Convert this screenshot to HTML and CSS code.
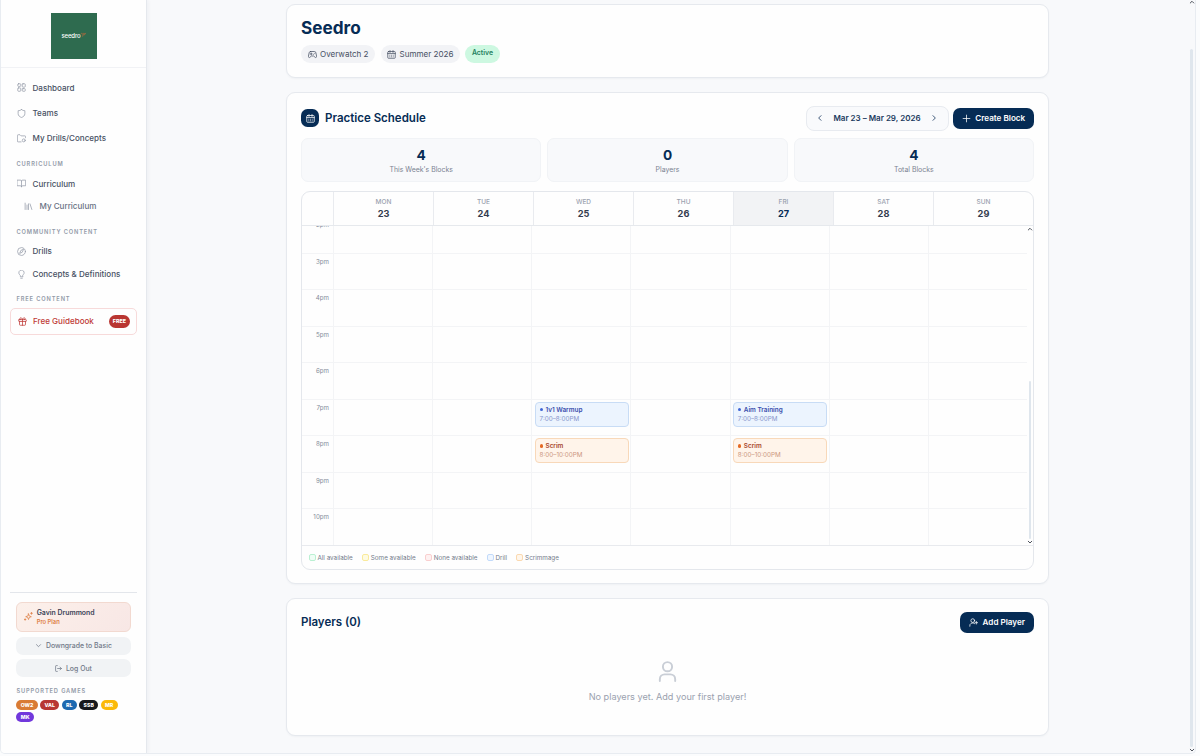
FILE: index.html
```html
<!DOCTYPE html>
<html lang="en">
<head>
    <meta charset="UTF-8">
    <meta name="viewport" content="width=device-width, initial-scale=1.0">
    <title>Seedro - Team</title>
    <link rel="stylesheet" href="styles.css">
</head>
<body>
    <svg class="sprite" xmlns="http://www.w3.org/2000/svg">
        <symbol id="i-dashboard" viewBox="0 0 24 24"><rect x="2" y="2" width="8" height="7" rx="2"/><rect x="14" y="2" width="8" height="9" rx="2"/><rect x="2" y="13" width="8" height="9" rx="2"/><rect x="14" y="15" width="8" height="7" rx="2"/></symbol>
        <symbol id="i-shield" viewBox="0 0 24 24"><path d="M12 1.500c2.500 2 5.500 3 9 3v8c0 5-4 8.500-9 10-5-1.500-9-5-9-10v-8c3.500 0 6.500-1 9-3z"/></symbol>
        <symbol id="i-folder" viewBox="0 0 24 24"><path d="M11 21H3a2 2 0 0 1-2-2V4a2 2 0 0 1 2-2h5l3 3h10a2 2 0 0 1 2 2v3"/><circle cx="18" cy="17" r="4"/></symbol>
        <symbol id="i-book" viewBox="0 0 24 24"><path d="M12 6v15M1 3h8a3 3 0 0 1 3 3 3 3 0 0 1 3-3h8v15h-8a3 3 0 0 0-3 3 3 3 0 0 0-3-3H1z"/></symbol>
        <symbol id="i-library" viewBox="0 0 24 24"><path d="M16 5l5 15M12 5v15M8 8v12M3 3v17"/></symbol>
        <symbol id="i-compass" viewBox="0 0 24 24"><circle cx="12" cy="12" r="10.500"/><path d="M17 7l-3 7-7 3 3-7z"/></symbol>
        <symbol id="i-bulb" viewBox="0 0 24 24"><path d="M15 15c.2-1 .7-1.700 1.500-2.500A7 7 0 1 0 5 8c0 1.300.5 3 2 4.500.8.800 1.500 1.500 2 2.500v3h6zM10 22h4"/></symbol>
        <symbol id="i-gift" viewBox="0 0 24 24"><rect x="2" y="7" width="20" height="5" rx="1"/><path d="M12 7v15M4 12v8a2 2 0 0 0 2 2h12a2 2 0 0 0 2-2v-8M7.500 7a2.500 2.500 0 0 1 0-5C11 2 12 7 12 7s1-5 4.500-5a2.500 2.500 0 0 1 0 5"/></symbol>
        <symbol id="i-spark" viewBox="0 0 24 24"><path d="M12 5l2 5.500 5.500 2-5.500 2-2 5.500-2-5.500-5.500-2 5.500-2zM20 1v5M17.500 3.500h5M3 18v4M1 20h4"/></symbol>
        <symbol id="i-down" viewBox="0 0 24 24"><path d="M5 9l7 7 7-7"/></symbol>
        <symbol id="i-up" viewBox="0 0 24 24"><path d="M5 16l7-7 7 7"/></symbol>
        <symbol id="i-left" viewBox="0 0 24 24"><path d="M15 5l-7 7 7 7"/></symbol>
        <symbol id="i-right" viewBox="0 0 24 24"><path d="M9 5l7 7-7 7"/></symbol>
        <symbol id="i-logout" viewBox="0 0 24 24"><path d="M8 2H4a2 2 0 0 0-2 2v16a2 2 0 0 0 2 2h4M9 12h13M17 7l5 5-5 5"/></symbol>
        <symbol id="i-game" viewBox="0 0 24 24"><path d="M7 4h10a4 4 0 0 1 4 3.500l2 9.500a2.500 2.500 0 0 1-4.500 2L15 16H9l-3.500 3A2.500 2.500 0 0 1 1 17l2-9.500A4 4 0 0 1 7 4zM6 10.500h5M8.500 8v5M15 11.500h.1M18 9h.1"/></symbol>
        <symbol id="i-calendar" viewBox="0 0 24 24"><rect x="2" y="4" width="20" height="18" rx="2"/><path d="M8 1.500v5M16 1.500v5M2 9.500h20M7.500 14h.1M12 14h.1M16.500 14h.1M7.500 18h.1M12 18h.1M16.500 18h.1"/></symbol>
        <symbol id="i-plus" viewBox="0 0 24 24"><path d="M12 3v18M3 12h18"/></symbol>
        <symbol id="i-user" viewBox="0 0 24 24"><circle cx="12" cy="7" r="4.800"/><path d="M4 22v-2a5 5 0 0 1 5-5h6a5 5 0 0 1 5 5v2"/></symbol>
        <symbol id="i-user-plus" viewBox="0 0 24 24"><circle cx="10" cy="7" r="5"/><path d="M2 22a8 8 0 0 1 13-7.200M19.500 9v7M16 12.500h7"/></symbol>
    </svg>

    <div class="app">
        <aside class="sidebar">
            <div class="logo">
                <div class="logo-box">seedro<svg class="logo-mark" viewBox="0 0 12 12"><path d="M1 2l3 2 2-3 2 2 3-1-3 4-3-1-1 4"/></svg></div>
            </div>
            <nav class="nav">
                <a class="nav-item main-item"><svg><use href="#i-dashboard"/></svg>Dashboard</a>
                <a class="nav-item main-item"><svg><use href="#i-shield"/></svg>Teams</a>
                <a class="nav-item main-item"><svg><use href="#i-folder"/></svg>My Drills/Concepts</a>
                <h4 class="nav-title">Curriculum</h4>
                <a class="nav-item"><svg><use href="#i-book"/></svg>Curriculum</a>
                <a class="nav-item sub-item"><svg><use href="#i-library"/></svg>My Curriculum</a>
                <h4 class="nav-title">Community Content</h4>
                <a class="nav-item"><svg><use href="#i-compass"/></svg>Drills</a>
                <a class="nav-item"><svg><use href="#i-bulb"/></svg>Concepts &amp; Definitions</a>
                <h4 class="nav-title">Free Content</h4>
                <a class="guidebook"><svg><use href="#i-gift"/></svg>Free Guidebook<span class="free">FREE</span></a>
            </nav>
            <div class="side-footer">
                <div class="plan">
                    <svg><use href="#i-spark"/></svg>
                    <div>
                        <div class="plan-user">Gavin Drummond</div>
                        <div class="plan-name">Pro Plan</div>
                    </div>
                </div>
                <button class="side-btn"><svg><use href="#i-down"/></svg>Downgrade to Basic</button>
                <button class="side-btn"><svg><use href="#i-logout"/></svg>Log Out</button>
                <h4 class="games-title">Supported Games</h4>
                <div class="games">
                    <span class="game ow">OW2</span>
                    <span class="game val">VAL</span>
                    <span class="game rl">RL</span>
                    <span class="game ssb">SSB</span>
                    <span class="game mr">MR</span>
                    <span class="game mk">MK</span>
                </div>
            </div>
        </aside>

        <main class="main">
            <div class="content">
                <section class="card team">
                    <h1>Seedro</h1>
                    <div class="tags">
                        <span class="tag"><svg><use href="#i-game"/></svg>Overwatch 2</span>
                        <span class="tag"><svg><use href="#i-calendar"/></svg>Summer 2026</span>
                        <span class="tag active">Active</span>
                    </div>
                </section>

                <section class="card schedule">
                    <div class="card-head">
                        <span class="head-icon"><svg><use href="#i-calendar"/></svg></span>
                        <h2>Practice Schedule</h2>
                        <div class="week"><svg><use href="#i-left"/></svg><span>Mar 23 – Mar 29, 2026</span><svg><use href="#i-right"/></svg></div>
                        <button class="btn create"><svg><use href="#i-plus"/></svg>Create Block</button>
                    </div>
                    <div class="stats">
                        <div class="stat"><b>4</b><span>This Week's Blocks</span></div>
                        <div class="stat"><b>0</b><span>Players</span></div>
                        <div class="stat"><b>4</b><span>Total Blocks</span></div>
                    </div>
                    <div class="calendar">
                        <div class="days">
                            <div></div>
                            <div class="day"><span>MON</span><b>23</b></div>
                            <div class="day"><span>TUE</span><b>24</b></div>
                            <div class="day"><span>WED</span><b>25</b></div>
                            <div class="day"><span>THU</span><b>26</b></div>
                            <div class="day today"><span>FRI</span><b>27</b></div>
                            <div class="day"><span>SAT</span><b>28</b></div>
                            <div class="day"><span>SUN</span><b>29</b></div>
                        </div>
                        <div class="hours">
                            <div class="grid">
                                <div class="row"><span>2pm</span><i></i><i></i><i></i><i></i><i></i><i></i><i></i></div>
                                <div class="row"><span>3pm</span><i></i><i></i><i></i><i></i><i></i><i></i><i></i></div>
                                <div class="row"><span>4pm</span><i></i><i></i><i></i><i></i><i></i><i></i><i></i></div>
                                <div class="row"><span>5pm</span><i></i><i></i><i></i><i></i><i></i><i></i><i></i></div>
                                <div class="row"><span>6pm</span><i></i><i></i><i></i><i></i><i></i><i></i><i></i></div>
                                <div class="row">
                                    <span>7pm</span><i></i><i></i>
                                    <div class="cell"><div class="event drill"><b>1v1 Warmup</b><small>7:00–8:00PM</small></div></div>
                                    <i></i>
                                    <div class="cell"><div class="event drill"><b>Aim Training</b><small>7:00–8:00PM</small></div></div>
                                    <i></i><i></i>
                                </div>
                                <div class="row">
                                    <span>8pm</span><i></i><i></i>
                                    <div class="cell"><div class="event scrim"><b>Scrim</b><small>8:00–10:00PM</small></div></div>
                                    <i></i>
                                    <div class="cell"><div class="event scrim"><b>Scrim</b><small>8:00–10:00PM</small></div></div>
                                    <i></i><i></i>
                                </div>
                                <div class="row"><span>9pm</span><i></i><i></i><i></i><i></i><i></i><i></i><i></i></div>
                                <div class="row"><span>10pm</span><i></i><i></i><i></i><i></i><i></i><i></i><i></i></div>
                            </div>
                            <div class="scrollbar"><svg><use href="#i-up"/></svg><div class="thumb"></div><svg><use href="#i-down"/></svg></div>
                        </div>
                        <div class="legend">
                            <span class="all">All available</span>
                            <span class="some">Some available</span>
                            <span class="none">None available</span>
                            <span class="drill-key">Drill</span>
                            <span class="scrim-key">Scrimmage</span>
                        </div>
                    </div>
                </section>

                <section class="card players">
                    <div class="card-head">
                        <h2>Players (0)</h2>
                        <button class="btn add"><svg><use href="#i-user-plus"/></svg>Add Player</button>
                    </div>
                    <div class="empty">
                        <svg><use href="#i-user"/></svg>
                        <p>No players yet. Add your first player!</p>
                    </div>
                </section>
            </div>
            <div class="scrollbar page-scroll"><svg><use href="#i-up"/></svg><div class="thumb"></div><svg><use href="#i-down"/></svg></div>
        </main>
    </div>
</body>
</html>
```
FILE: styles.css
```css
* {
    box-sizing: border-box;
}
body {
    margin: 0;
    height: 756px;
    overflow: hidden;
    background: #fbfcfd;
    font-family: Inter, "Liberation Sans", sans-serif;
    font-size: 8px;
    color: #475063;
}
h1, h2, h4, p {
    margin: 0;
}
svg {
    width: 9px;
    height: 9px;
    flex: none;
    fill: none;
    stroke: currentColor;
    stroke-width: 2;
    stroke-linecap: round;
    stroke-linejoin: round;
}
.sprite {
    display: none;
}
button {
    font-family: inherit;
    border: 0;
    padding: 0;
}
.app {
    display: flex;
    width: 1196px;
    height: 754px;
    border: 1px solid #e8ecf1;
    border-top: 0;
    border-radius: 0 0 5px 5px;
    background: #f8f9fb;
    overflow: hidden;
}

/* sidebar */
.sidebar {
    display: flex;
    flex-direction: column;
    width: 146px;
    flex: none;
    background: #fefefe;
    border-right: 1px solid #e5e8ed;
    box-shadow: 1px 0 4px rgba(20, 40, 80, 0.05);
}
.logo {
    height: 68px;
    padding-top: 12.5px;
    border-bottom: 1px solid #f1f2f5;
}
.logo-box {
    display: flex;
    align-items: center;
    justify-content: center;
    width: 46px;
    height: 46px;
    margin: 0 auto;
    background: #2e6b4f;
    color: #fff;
    font-size: 6px;
    font-weight: 500;
    letter-spacing: -0.1px;
}
.logo-mark {
    width: 5px;
    height: 6px;
    margin-bottom: 2px;
    stroke-width: 1.5;
    color: #c9683c;
}
.nav {
    padding: 7.3px 9px 0 8.5px;
}
.nav-item {
    display: flex;
    align-items: center;
    gap: 7px;
    height: 22.8px;
    padding-left: 7px;
    font-size: 8.05px;
    font-weight: 500;
}
.nav-item svg {
    color: #959ca9;
}
.main-item {
    height: 25.2px;
}
.sub-item {
    padding-left: 14px;
    color: #697183;
}
.nav-title, .games-title {
    font-size: 5.7px;
    font-weight: 600;
    letter-spacing: 0.87px;
    text-transform: uppercase;
    color: #929aa8;
}
.nav-title {
    height: 20.1px;
    margin-top: 1.2px;
    padding: 8px 0 0 7px;
    line-height: 7px;
}
.sub-item + .nav-title, .nav-item:not(.main-item) + .nav-title {
    margin-top: 2px;
}
.guidebook {
    display: flex;
    align-items: center;
    gap: 6.5px;
    height: 27px;
    padding: 0 6.5px 0 7px;
    border: 1px solid #f7dada;
    border-radius: 5px;
    color: #bf3a37;
    font-size: 8.05px;
    font-weight: 500;
}
.free {
    margin-left: auto;
    padding: 0 3.6px;
    height: 13px;
    line-height: 13px;
    border-radius: 7px;
    background: #b93632;
    color: #fff;
    font-size: 5.3px;
    font-weight: 800;
}
.side-footer {
    height: 161px;
    margin: auto 9px 0;
    padding: 8.8px 6.5px 0 6.4px;
    border-top: 1px solid #e3e6eb;
}
.plan {
    display: flex;
    align-items: center;
    gap: 3.8px;
    height: 30.5px;
    padding: 0 0 0.5px 6.5px;
    border: 1px solid #f2d9d0;
    border-radius: 6px;
    background: linear-gradient(135deg, #fcf0ea, #f8e7e5);
    color: #dd7d43;
}
.plan-user {
    font-size: 6.9px;
    line-height: 9px;
    font-weight: 600;
    color: #3a4357;
}
.plan-name {
    font-size: 5.8px;
    line-height: 9px;
    font-weight: 600;
}
.side-btn {
    display: flex;
    align-items: center;
    justify-content: center;
    gap: 4px;
    width: 100%;
    height: 18px;
    margin-top: 4.6px;
    border-radius: 7px;
    background: #f1f3f5;
    color: #707887;
    font-size: 6.9px;
    font-weight: 500;
}
.side-btn svg {
    width: 7px;
    height: 7px;
    stroke-width: 2.5;
}
.games-title {
    margin: 10px 0 5.300px;
    line-height: 7px;
}
.games {
    display: flex;
    flex-wrap: wrap;
    gap: 2.300px;
}
.game {
    height: 10px;
    padding: 0 4.4px;
    line-height: 10px;
    border-radius: 5px;
    color: #fff;
    font-size: 5.2px;
    font-weight: 800;
}
.ow { background: #d97b34; }
.val { background: #b83633; }
.rl { background: #1d69b0; }
.ssb { background: #17181c; }
.mr { background: #fbb908; }
.mk { background: #7138dc; }

/* main column */
.main {
    display: flex;
    flex: 1;
}
.content {
    display: flex;
    flex-direction: column;
    gap: 14px;
    width: 763px;
    margin: 4px auto 0;
}
.card {
    flex: none;
    padding: 13px 14px;
    border: 1px solid #e6e9ee;
    border-radius: 9px;
    background: #fefefe;
    box-shadow: 0 1px 2px rgba(20, 40, 80, 0.04);
}
.team {
    height: 74px;
    padding-top: 14px;
}
h1 {
    font-size: 17.2px;
    line-height: 18px;
    font-weight: 700;
    color: #062c55;
}
.tags {
    display: flex;
    gap: 5.500px;
    margin-top: 8px;
}
.tag {
    display: flex;
    align-items: center;
    gap: 3.5px;
    height: 18px;
    padding: 0 6.5px;
    border-radius: 9px;
    background: #f2f3f6;
    font-size: 8.05px;
}
.active {
    padding-bottom: 3px;
    background: #cdf8e1;
    color: #1f8060;
    font-size: 6.9px;
    font-weight: 600;
}
.schedule {
    height: 492px;
}
.card-head {
    display: flex;
    align-items: center;
    height: 24px;
}
.head-icon {
    display: flex;
    align-items: center;
    justify-content: center;
    width: 18px;
    height: 18px;
    margin-right: 6px;
    border-radius: 6.5px;
    background: #062c55;
    color: #fff;
}
h2 {
    font-size: 11.5px;
    font-weight: 600;
    color: #062c55;
}
.week {
    display: flex;
    align-items: center;
    justify-content: space-between;
    width: 143px;
    height: 25px;
    margin-left: auto;
    padding: 0 9px;
    border: 1px solid #e8ebf0;
    border-radius: 8px;
    background: #f9fafc;
    color: #1c3a60;
    font-size: 8px;
    font-weight: 600;
}
.week svg {
    width: 8px;
    height: 8px;
    stroke-width: 2.5;
}
.btn {
    display: flex;
    align-items: center;
    justify-content: center;
    gap: 4.500px;
    height: 21px;
    border-radius: 7px;
    background: #062c55;
    color: #fff;
    font-size: 8.1px;
    font-weight: 600;
}
.create {
    width: 81px;
    margin-left: 4.500px;
}
.add {
    width: 74px;
    margin-left: auto;
}
.stats {
    display: grid;
    grid-template-columns: repeat(3, 1fr);
    gap: 6px;
    margin-top: 8px;
}
.stat {
    display: flex;
    flex-direction: column;
    align-items: center;
    height: 44px;
    padding-top: 8px;
    border: 1px solid #f1f3f6;
    border-radius: 7px;
    background: #f8f9fb;
}
.stat b {
    font-size: 13.7px;
    line-height: 16px;
    font-weight: 700;
    color: #062c55;
}
.stat span {
    margin-top: 2px;
    font-size: 6.9px;
    line-height: 9px;
    color: #7a8291;
}
.calendar {
    height: 379px;
    margin-top: 9px;
    border: 1px solid #e4e7ec;
    border-radius: 9px;
    overflow: hidden;
}
.days {
    display: grid;
    grid-template-columns: 31px repeat(7, 1fr);
    height: 34px;
    border-bottom: 1px solid #e6e9ed;
}
.day {
    display: flex;
    flex-direction: column;
    align-items: center;
    padding-top: 5.500px;
    border-left: 1px solid #e9ebef;
}
.day span {
    font-size: 6.5px;
    line-height: 8px;
    font-weight: 500;
    color: #9ba2af;
}
.day b {
    margin-top: 2px;
    font-size: 9.2px;
    line-height: 12px;
    font-weight: 700;
    color: #343c4e;
}
.today {
    background: #f2f3f5;
}
.today b {
    color: #062c55;
}
.hours {
    display: flex;
    height: 319.500px;
    overflow: hidden;
    border-bottom: 1px solid #e8eaee;
}
.grid {
    align-self: flex-end;
    width: 725px;
}
.row {
    display: grid;
    grid-template-columns: 31px repeat(7, 1fr);
    height: 36.500px;
    border-top: 1px solid #f3f4f6;
}
.row > * {
    border-left: 1px solid #f3f4f6;
}
.row > span {
    padding: 4px 4px 0 0;
    border-left: 0;
    font-size: 6.2px;
    line-height: 8px;
    text-align: right;
    color: #858c9a;
}
.event {
    height: 25px;
    margin: 2px 1.7px 0 2.3px;
    padding: 3px 4px;
    border: 1px solid;
    border-radius: 4px;
}
.event b {
    display: flex;
    align-items: center;
    gap: 2.500px;
    font-size: 6.4px;
    line-height: 8px;
    font-weight: 600;
}
.event b::before {
    content: "";
    width: 3.4px;
    height: 3.4px;
    border-radius: 50%;
    background: #3f65d6;
}
.event small {
    display: block;
    margin-top: 1px;
    font-size: 6.3px;
    line-height: 9px;
}
.drill {
    border-color: #c8dcf5;
    background: #ecf4fe;
    color: #3a4eac;
}
.drill small {
    color: #8795cc;
}
.scrim {
    border-color: #f8d8b9;
    background: #fff4ea;
    color: #a8472d;
}
.scrim b::before {
    background: #e56a24;
}
.scrim small {
    color: #cb9680;
}
.scrollbar {
    display: flex;
    flex-direction: column;
    align-items: center;
    width: 6px;
    color: #50555e;
}
.scrollbar svg {
    width: 6px;
    height: 6px;
    stroke-width: 4;
}
.thumb {
    width: 2.500px;
    height: 158px;
    margin-top: auto;
    border-radius: 2px;
    background: #dfe6ed;
}
.legend {
    display: flex;
    gap: 9px;
    padding: 8px 6.5px;
    font-size: 6.3px;
    line-height: 8px;
    color: #747c8b;
}
.legend span {
    display: flex;
    align-items: center;
    gap: 2px;
}
.legend span::before {
    content: "";
    width: 5px;
    height: 5px;
    border: 1px solid;
    border-radius: 2px;
}
.legend .all::before { border-color: #baf0d2; background: #effdf5; }
.legend .some::before { border-color: #faea9c; background: #fefbe2; }
.legend .none::before { border-color: #f9cfcf; background: #fef1f1; }
.legend .drill-key::before { border-color: #c2dafa; background: #eff6ff; }
.legend .scrim-key::before { border-color: #fbd9b0; background: #fff6eb; }

.players {
    height: 138px;
    padding-top: 11px;
}
.empty {
    display: flex;
    flex-direction: column;
    align-items: center;
    padding-top: 26px;
    color: #9aa1ae;
    font-size: 9.15px;
}
.empty svg {
    width: 23px;
    height: 23px;
    color: #c9ced6;
}
.empty p {
    margin-top: 7.5px;
    line-height: 12px;
}
.page-scroll {
    width: 7px;
}
.page-scroll svg:first-child {
    margin-top: -1px;
}
.page-scroll .thumb {
    height: 698px;
}
```
